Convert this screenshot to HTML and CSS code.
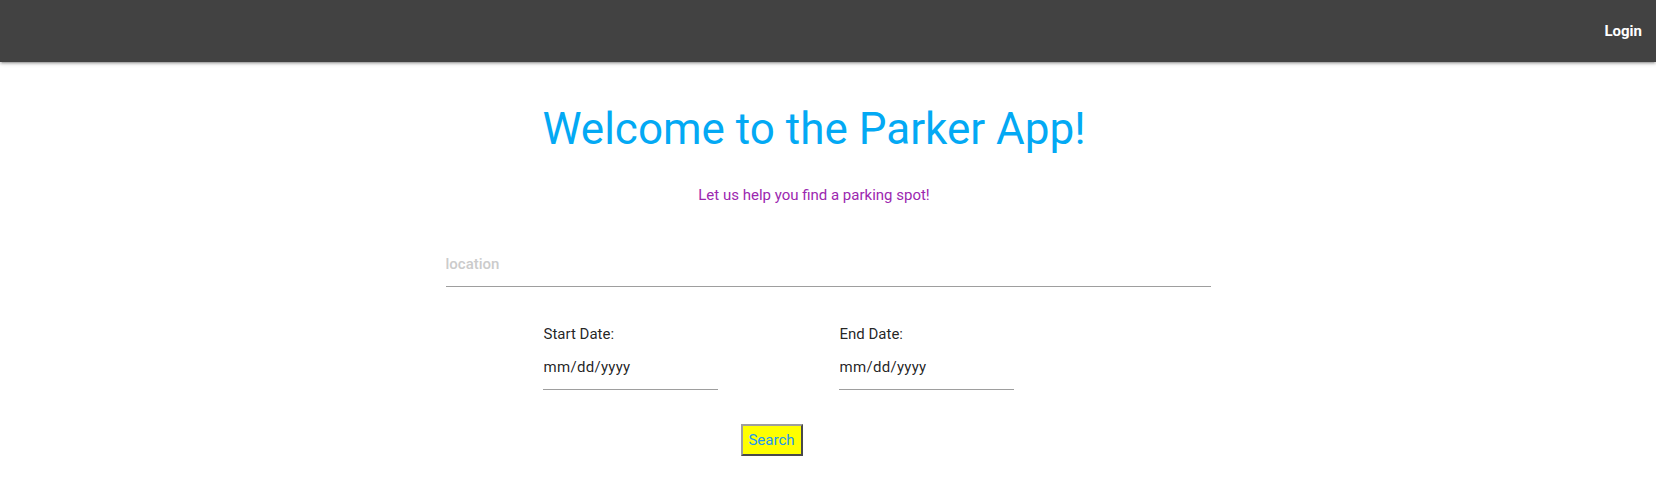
FILE: index.html
```html
<!DOCTYPE html>
<html lang="en">
<head>
<meta charset="utf-8">
<title>Parker App</title>
<link rel="stylesheet" href="styles.css">
</head>
<body>
<nav class="navbar">
  <a class="nav-link" href="#">Login</a>
</nav>
<main class="main">
  <div class="intro">
    <h1 class="title">Welcome to the Parker App!</h1>
    <p class="subtitle">Let us help you find a parking spot!</p>
  </div>
  <input class="location" type="text" placeholder="location">
  <div class="dates">
    <div class="date-field">
      <label class="date-label">Start Date:</label>
      <input class="date-input" type="text" value="mm/dd/yyyy">
    </div>
    <div class="date-field">
      <label class="date-label">End Date:</label>
      <input class="date-input" type="text" value="mm/dd/yyyy">
    </div>
  </div>
  <div class="actions">
    <button class="search-btn" type="button">Search</button>
  </div>
</main>
</body>
</html>
```
FILE: styles.css
```css
html, body {
  margin: 0;
  padding: 0;
}
body {
  font-family: Roboto, "Liberation Sans", sans-serif;
  color: rgba(0, 0, 0, 0.87);
  background: #fff;
}
.navbar {
  height: 62px;
  background: #424242;
  display: flex;
  justify-content: flex-end;
  align-items: center;
  box-shadow: 0 2px 2px 0 rgba(0,0,0,0.14), 0 3px 1px -2px rgba(0,0,0,0.12), 0 1px 5px 0 rgba(0,0,0,0.2);
}
.nav-link {
  color: #fff;
  text-decoration: none;
  font-size: 15px;
  font-weight: 700;
  padding: 0 14px;
  line-height: 58px;
}
.main {
  width: 765px;
  margin: 0 auto;
  display: flex;
  flex-direction: column;
}
.intro {
  margin-right: 28px;
  text-align: center;
}
.title {
  margin: 42px 0 0;
  font-size: 44px;
  line-height: 50px;
  font-weight: 400;
  color: #03a9f4;
}
.subtitle {
  margin: 31px 0 0;
  font-size: 15px;
  line-height: 20px;
  color: #9c27b0;
}
.location {
  margin-top: 37px;
  height: 44px;
  padding: 0;
  border: none;
  border-bottom: 1px solid #9e9e9e;
  font-family: inherit;
  font-size: 15px;
  font-weight: 500;
  outline: none;
  background: transparent;
}
.location::placeholder {
  color: #cbcbcb;
}
.dates {
  display: flex;
  gap: 121px;
  padding-left: 97px;
  margin-top: 37px;
}
.date-field {
  display: flex;
  flex-direction: column;
  width: 175px;
  gap: 1px;
}
.date-label {
  font-size: 15px;
  line-height: 20px;
  padding-left: 1px;
}
.date-input {
  height: 44px;
  padding: 0 0 0 1px;
  border: none;
  border-bottom: 1px solid #9e9e9e;
  font-family: inherit;
  font-size: 15px;
  letter-spacing: 0.3px;
  color: rgba(0, 0, 0, 0.87);
  background: transparent;
  outline: none;
}
.actions {
  display: flex;
  padding-left: 295px;
  margin-top: 34px;
}
.search-btn {
  width: 62px;
  height: 32px;
  padding: 0;
  background: #ffff00;
  border: 2px outset #9e9e9e;
  color: #2196f3;
  font-family: inherit;
  font-size: 15px;
}
```
